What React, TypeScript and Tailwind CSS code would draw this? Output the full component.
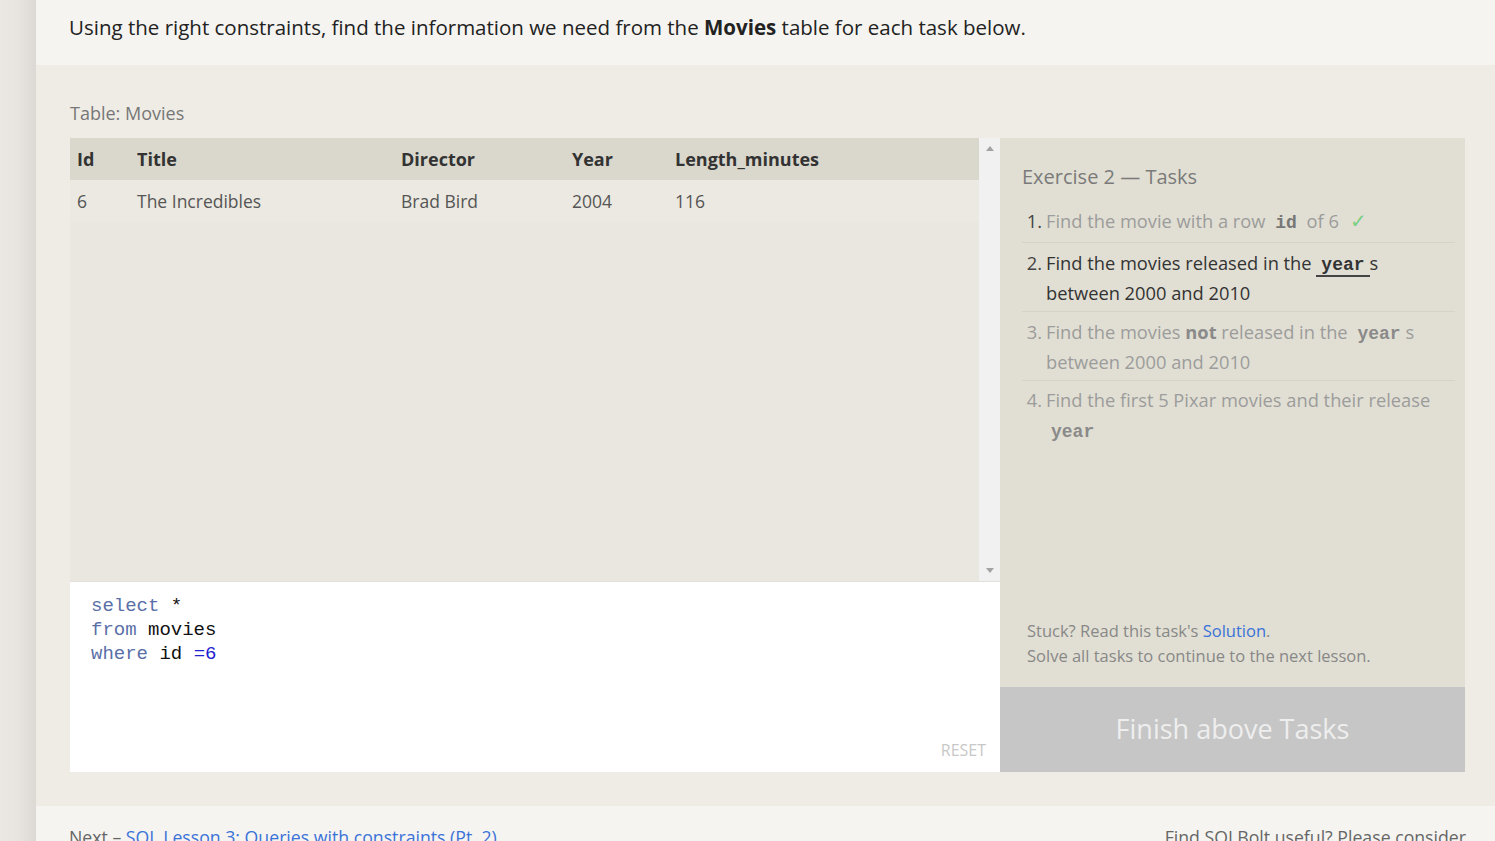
import React from 'react';

const sans = { fontFamily: '"Open Sans", "Noto Sans", sans-serif' };
const mono = '[font-family:"Liberation_Mono","DejaVu_Sans_Mono",monospace]';

const columns = ['Id', 'Title', 'Director', 'Year', 'Length_minutes'];
const rows = [['6', 'The Incredibles', 'Brad Bird', '2004', '116']];

const Kw = ({ children }: { children: React.ReactNode }) => (
  <code className={`${mono} font-bold text-[18px] leading-[18px] px-[5px]`}>{children}</code>
);

export default function App() {
  return (
    <div className="flex w-[1495px] h-[841px] overflow-hidden bg-[#f5f4f0]" style={sans}>
      <div className="w-[36px] shrink-0 bg-gradient-to-r from-[#ebe8e4] via-[#e8e5e1] to-[#dcd8d4]" />
      <div className="flex-1 flex flex-col">
        <div className="h-[65px] shrink-0 px-[33px] flex items-center bg-[#f5f4f0]">
          <p className="text-[20.5px] text-[#222] pb-[10px]">
            Using the right constraints, find the information we need from the <b>Movies</b> table for each task below.
          </p>
        </div>

        <div className="shrink-0 h-[741px] bg-[#efece5] pl-[34px] pr-[30px] pt-[36px]">
          <div className="text-[18px] text-[#777] h-[37px] leading-[24px]">Table: Movies</div>
          <div className="flex h-[634px]">
            <div className="w-[930px] flex flex-col">
              <div className="flex h-[443px] bg-[#e9e7df]">
                <div className="flex-1">
                  <div className="grid grid-cols-[60px_264px_171px_103px_1fr] h-[42px] items-center bg-[#dad8cd] text-[18px] font-bold text-[#333]">
                    {columns.map((c) => (
                      <div key={c} className="pl-[7px]">{c}</div>
                    ))}
                  </div>
                  {rows.map((r, i) => (
                    <div key={i} className="grid grid-cols-[60px_264px_171px_103px_1fr] h-[42px] items-center bg-[#ebe9e1] text-[17.5px] text-[#555]">
                      {r.map((v, j) => (
                        <div key={j} className="pl-[7px]">{v}</div>
                      ))}
                    </div>
                  ))}
                </div>
                <div className="w-[21px] bg-[#f1f1f1] flex flex-col items-center justify-between py-[8px]">
                  <div className="w-0 h-0 border-x-[4px] border-x-transparent border-b-[5px] border-b-[#a3a3a3]" />
                  <div className="w-0 h-0 border-x-[4px] border-x-transparent border-t-[5px] border-t-[#a3a3a3]" />
                </div>
              </div>
              <div className="flex-1 bg-white border-t border-[#e2e0d8] relative pt-[12px] pl-[21px]">
                <pre className={`${mono} text-[19px] leading-[24px] text-[#111]`}>
                  <span className="text-[#5a6fa8]">select</span> *{'\n'}
                  <span className="text-[#5a6fa8]">from</span> movies{'\n'}
                  <span className="text-[#5a6fa8]">where</span> id <span className="text-[#2020d0]">=6</span>
                </pre>
                <span className="absolute right-[14px] bottom-[10px] text-[16px] text-[#c8c8c8]">RESET</span>
              </div>
            </div>

            <div className="w-[465px] bg-[#e1dfd3] flex flex-col">
              <div className="flex-1 pl-[22px] pr-[10px] pt-[24px]">
                <h3 className="text-[20px] text-[#7a7a7a] leading-[30px]">Exercise 2 — Tasks</h3>
                <ol className="mt-[14px] text-[18.3px] leading-[30px]">
                  <li className="flex pb-[6px] border-b border-[#d6d3c8]">
                    <span className="w-[24px] text-right pr-[4px] text-[#444]">1.</span>
                    <span className="text-[#9c9c9c]">
                      Find the movie with a row <Kw><span className="text-[#777]">id</span></Kw> of 6{' '}
                      <span className="text-[#7ccf84] text-[20px] leading-[20px] ml-[6px]">✓</span>
                    </span>
                  </li>
                  <li className="flex pt-[5px] pb-[3px] border-b border-[#d6d3c8]">
                    <span className="w-[24px] text-right pr-[4px] text-[#444] shrink-0">2.</span>
                    <span className="text-[#333]">
                      Find the movies released in the{' '}
                      <code className={`${mono} font-bold text-[18px] leading-[18px] px-[5px] border-b-2 border-[#444]`}>year</code>s between 2000 and 2010
                    </span>
                  </li>
                  <li className="flex pt-[5px] pb-[3px] border-b border-[#d6d3c8]">
                    <span className="w-[24px] text-right pr-[4px] text-[#9c9c9c] shrink-0">3.</span>
                    <span className="text-[#9c9c9c]">
                      Find the movies <b className="text-[#8a8a8a]">not</b> released in the <Kw><span className="text-[#8a8a8a]">year</span></Kw>s between 2000 and 2010
                    </span>
                  </li>
                  <li className="flex pt-[4px]">
                    <span className="w-[24px] text-right pr-[4px] text-[#9c9c9c] shrink-0">4.</span>
                    <span className="text-[#9c9c9c]">
                      Find the first 5 Pixar movies and their release <Kw><span className="text-[#8a8a8a]">year</span></Kw>
                    </span>
                  </li>
                </ol>
              </div>
              <div className="pl-[27px] pb-[19px] text-[16.5px] leading-[25px] text-[#888]">
                <p>Stuck? Read this task's <span className="text-[#3a72d8]">Solution</span>.</p>
                <p>Solve all tasks to continue to the next lesson.</p>
              </div>
              <div className="h-[85px] bg-[#c6c6c6] flex items-center justify-center text-[27px] text-[#eeeeee]">
                Finish above Tasks
              </div>
            </div>
          </div>
        </div>

        <div className="flex-1 bg-[#f5f4f0] pl-[33px] pr-[29px] pt-[18px] flex justify-between text-[17.7px] text-[#666]">
          <p>
            Next – <span className="text-[#3a72d8] underline">SQL Lesson 3: Queries with constraints (Pt. 2)</span>
          </p>
          <p>Find SQLBolt useful? Please consider</p>
        </div>
      </div>
    </div>
  );
}
